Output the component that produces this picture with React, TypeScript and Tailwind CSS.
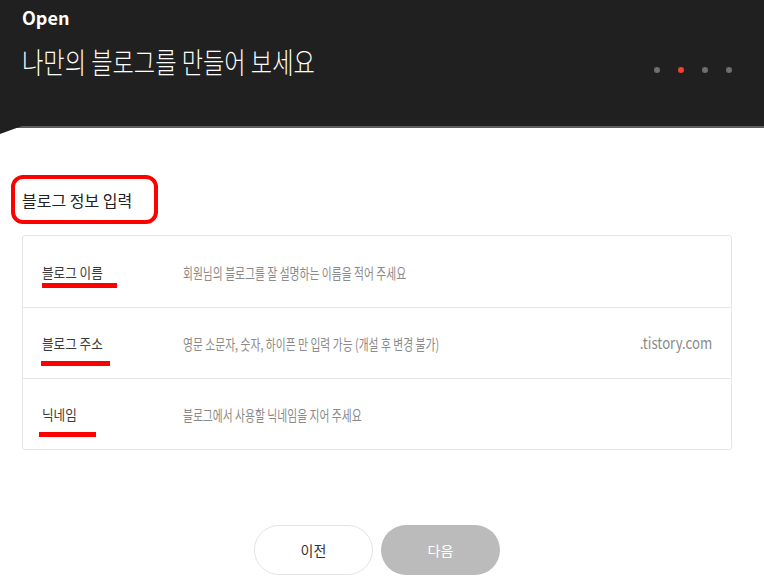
const fontStack = '"Noto Sans CJK KR", "Noto Sans", sans-serif';

type Row = {
  label: string;
  hint: string;
  suffix?: string;
  markClassName: string;
};

const rows: Row[] = [
  {
    label: "블로그 이름",
    hint: "회원님의 블로그를 잘 설명하는 이름을 적어 주세요",
    markClassName: "left-[0px] top-[21px] w-[75px]",
  },
  {
    label: "블로그 주소",
    hint: "영문 소문자, 숫자, 하이픈 만 입력 가능 (개설 후 변경 불가)",
    suffix: ".tistory.com",
    markClassName: "-left-[1px] top-[28px] w-[69px]",
  },
  {
    label: "닉네임",
    hint: "블로그에서 사용할 닉네임을 지어 주세요",
    markClassName: "-left-[3px] top-[28px] w-[57px]",
  },
];

const steps = [false, true, false, false];

export default function App() {
  return (
    <div className="min-h-[586px] w-full bg-white" style={{ fontFamily: fontStack }}>
      <header className="relative h-[128px] border-b-2 border-[#5f5f5f] bg-[#202020] px-[22px] pt-[4px]">
        <h1 className="text-[18px] font-bold leading-[26px] text-white">Open</h1>
        <div className="mt-[10px] flex items-center justify-between">
          <p className="inline-block origin-left scale-x-[0.8] whitespace-nowrap text-[29px] font-light leading-[42px] text-white">
            나만의 블로그를 만들어 보세요
          </p>
          <div className="mr-[10px] mt-[18px] flex gap-[18px]">
            {steps.map((active, index) => (
              <span
                key={index}
                className={
                  active
                    ? "h-[6px] w-[6px] rounded-full bg-[#f3402f]"
                    : "h-[6px] w-[6px] rounded-full bg-[#6e6e6e]"
                }
              />
            ))}
          </div>
        </div>
        <svg className="absolute left-0 top-[126px]" width="22" height="8" viewBox="0 0 22 8">
          <polygon points="0,0 22,0 0,8" fill="#202020" />
        </svg>
      </header>

      <main className="pl-[22px] pr-[32px] pt-[60px]">
        <div className="relative inline-block">
          <h2 className="text-[16px] leading-[24px] text-[#222]">블로그 정보 입력</h2>
          <span className="absolute -left-[11px] -top-[13px] h-[49px] w-[147px] rounded-[12px] border-[4px] border-[#ff0000]" />
        </div>

        <div className="mt-[23px] rounded-[3px] border border-[#e6e6e6]">
          {rows.map((row, index) => (
            <div
              key={row.label}
              className={
                index === 0
                  ? "flex h-[71px] items-center px-[19px]"
                  : "flex h-[71px] items-center border-t border-[#e6e6e6] px-[19px]"
              }
            >
              <div className="relative w-[141px] shrink-0 text-[14px] leading-[20px] text-[#3a3a3a]">
                <span className="relative z-10 inline-block origin-left scale-x-[0.9] whitespace-nowrap">
                  {row.label}
                </span>
                <span className={`absolute h-[5px] bg-[#ff0000] ${row.markClassName}`} />
              </div>
              <div className="min-w-0 flex-1">
                <span className="inline-block origin-left scale-x-[0.72] whitespace-nowrap text-[15px] leading-[20px] text-[#8a8a8a]">
                  {row.hint}
                </span>
              </div>
              {row.suffix ? (
                <span className="inline-block origin-right scale-x-[0.88] whitespace-nowrap text-[15px] leading-[20px] text-[#8a8a8a]">
                  {row.suffix}
                </span>
              ) : null}
            </div>
          ))}
        </div>

        <div className="mt-[75px] flex justify-center gap-[8px]">
          <button
            type="button"
            className="h-[50px] w-[119px] rounded-full border border-[#e3e3e3] bg-white text-[14px] text-[#333]"
          >
            이전
          </button>
          <button
            type="button"
            className="h-[50px] w-[119px] rounded-full bg-[#bbbbbb] text-[14px] text-white"
          >
            다음
          </button>
        </div>
      </main>
    </div>
  );
}
